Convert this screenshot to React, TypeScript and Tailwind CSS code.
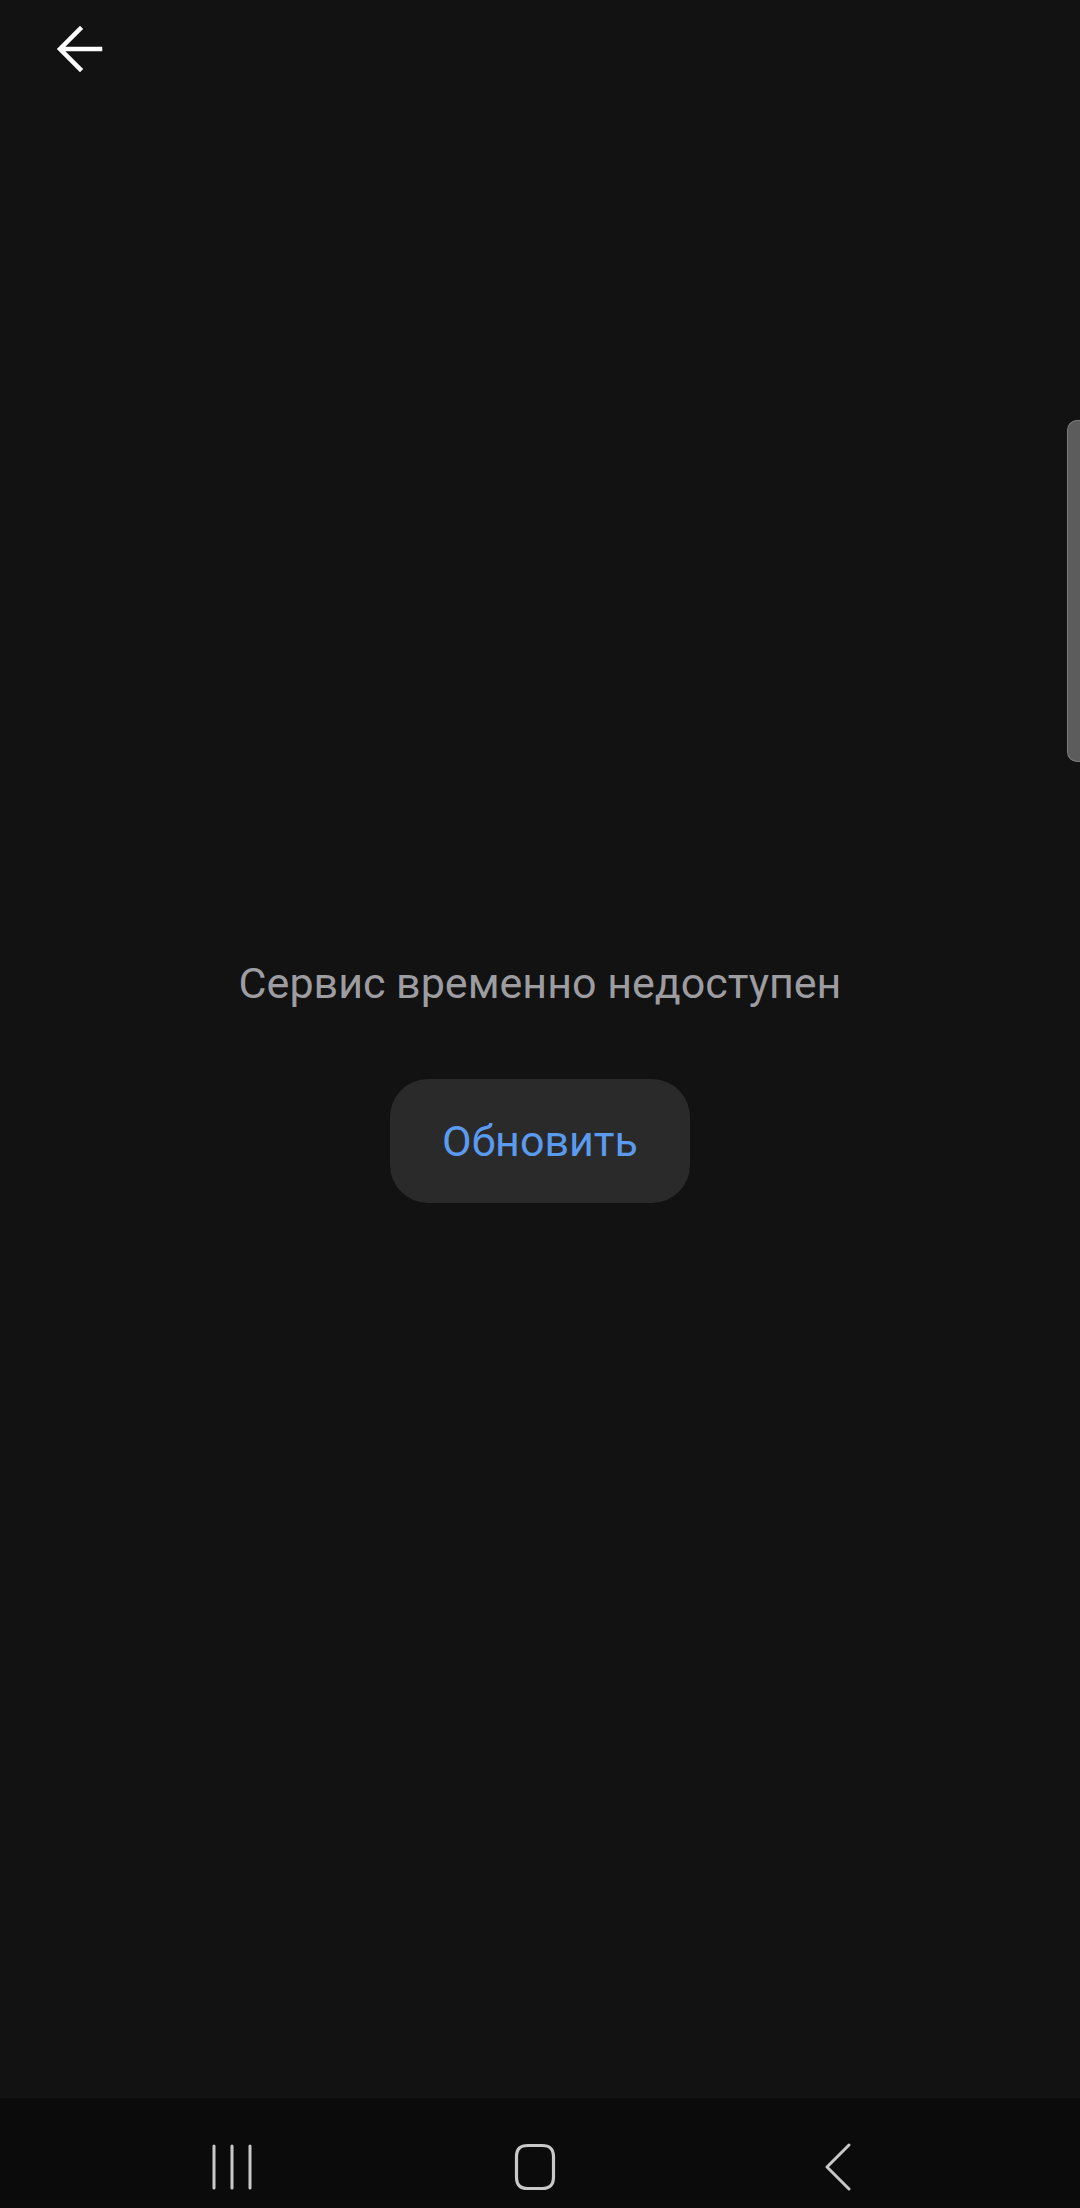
import React from 'react';

const BackArrow = () => (
  <svg width="48" height="48" viewBox="0 0 48 48" fill="none">
    <path d="M44 24H6M24 4L4 24l20 20" stroke="#ffffff" strokeWidth="4.5" strokeLinecap="square" strokeLinejoin="miter" />
  </svg>
);

const NavBar = () => (
  <div className="h-[110px] bg-[#0b0b0b] flex items-center justify-between pt-[2px]">
    <div className="w-[1080px] relative h-full">
      <svg className="absolute left-[208px] top-[44px]" width="48" height="46" viewBox="0 0 48 46" fill="none">
        <path d="M6 2v42M24 2v42M42 2v42" stroke="#c9c9c9" strokeWidth="3" strokeLinecap="round" />
      </svg>
      <svg className="absolute left-[512px] top-[43px]" width="48" height="48" viewBox="0 0 48 48" fill="none">
        <path d="M16 2.5h14c8 0 11.5 3.5 11.5 11.5v20c0 8-3.5 11.5-11.5 11.5H16C8 45.5 4.5 42 4.5 34V14C4.5 6 8 2.5 16 2.5z" stroke="#c9c9c9" strokeWidth="3.2" />
      </svg>
      <svg className="absolute left-[822px] top-[43px]" width="32" height="48" viewBox="0 0 32 48" fill="none">
        <path d="M27 2L5 24l22 22" stroke="#c9c9c9" strokeWidth="3" strokeLinecap="round" strokeLinejoin="round" />
      </svg>
    </div>
  </div>
);

export default function App() {
  return (
    <div className="relative w-[1080px] h-[2208px] flex flex-col bg-[#121212] font-['Roboto',sans-serif] overflow-hidden">
      <div className="h-[96px] flex items-center pl-[56px] pt-[2px]">
        <BackArrow />
      </div>
      <div className="flex-1 flex flex-col items-center pt-[861px]">
        <p className="text-[43px] leading-[52px] text-[#9c9ca1]">Сервис временно недоступен</p>
        <button className="mt-[70px] w-[300px] h-[124px] rounded-[38px] bg-[#2a2a2a] text-[43px] text-[#5b9bef]">
          Обновить
        </button>
      </div>
      <NavBar />
      <div className="absolute right-0 top-[420px] w-[13px] h-[342px] bg-[#5c5c5c] border border-r-0 border-[#7d7d7d] rounded-l-[10px]" />
    </div>
  );
}
